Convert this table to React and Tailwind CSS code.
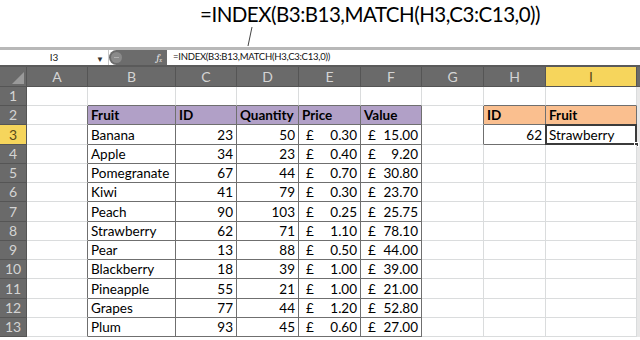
import React from "react";

const rows = [
    ["Banana", 23, 50, "0.30", "15.00"],
    ["Apple", 34, 23, "0.40", "9.20"],
    ["Pomegranate", 67, 44, "0.70", "30.80"],
    ["Kiwi", 41, 79, "0.30", "23.70"],
    ["Peach", 90, 103, "0.25", "25.75"],
    ["Strawberry", 62, 71, "1.10", "78.10"],
    ["Pear", 13, 88, "0.50", "44.00"],
    ["Blackberry", 18, 39, "1.00", "39.00"],
    ["Pineapple", 55, 21, "1.00", "21.00"],
    ["Grapes", 77, 44, "1.20", "52.80"],
    ["Plum", 93, 45, "0.60", "27.00"],
];

const cols = ["A", "B", "C", "D", "E", "F", "G", "H", "I"];
// row heights in px, 13 rows
const heights = ["h-[19px]", "h-[19px]", "h-[20px]", "h-[19px]", "h-[19px]", "h-[19px]", "h-[20px]", "h-[19px]", "h-[19px]", "h-[19px]", "h-[20px]", "h-[19px]", "h-[19px]"];

function inMain(r, c) {
    return r >= 2 && r <= 13 && c >= 1 && c <= 5;
}
function inLookup(r, c) {
    return r >= 2 && r <= 3 && c >= 7 && c <= 8;
}

function Cell({ r, c }) {
    const rightDark = inMain(r, c) || inMain(r, c + 1) || inLookup(r, c) || inLookup(r, c + 1);
    const bottomDark = inMain(r, c) || inMain(r + 1, c) || inLookup(r, c) || inLookup(r + 1, c);

    let bg = "bg-white";
    if (r === 2 && c >= 1 && c <= 5) bg = "bg-[#b1a0c7]";
    if (r === 2 && (c === 7 || c === 8)) bg = "bg-[#fabf8f]";

    const cls = [
        "relative flex min-h-0 items-center whitespace-nowrap border-r border-b px-[3px]",
        bg,
        rightDark ? "border-r-[#6f6f6f]" : "border-r-[#dadcdd]",
        bottomDark ? "border-b-[#6f6f6f]" : "border-b-[#dadcdd]",
    ].join(" ");

    let content = null;
    if (r === 2 && c >= 1 && c <= 5) {
        content = <span className="font-bold">{["Fruit", "ID", "Quantity", "Price", "Value"][c - 1]}</span>;
    } else if (r >= 3 && r <= 13 && c >= 1 && c <= 5) {
        const d = rows[r - 3];
        if (c === 1) content = <span>{d[0]}</span>;
        if (c === 2 || c === 3) content = <span className="ml-auto">{d[c - 1]}</span>;
        if (c === 4 || c === 5)
            content = (
                <div className="flex w-full pl-[4px]">
                    <span>£</span>
                    <span className="ml-auto">{d[c - 1]}</span>
                </div>
            );
    } else if (r === 2 && c === 7) {
        content = <span className="font-bold">ID</span>;
    } else if (r === 2 && c === 8) {
        content = <span className="font-bold">Fruit</span>;
    } else if (r === 3 && c === 7) {
        content = <span className="ml-auto">62</span>;
    } else if (r === 3 && c === 8) {
        content = (
            <>
                <span>Strawberry</span>
                <div className="absolute -left-[1px] -top-[1px] right-[-1px] bottom-[-1px] border-2 border-[#3b3b3b]" />
                <div className="absolute -bottom-[3px] -right-[3px] h-[5px] w-[5px] border border-white bg-[#3b3b3b]" />
            </>
        );
    }

    return <div className={cls}>{content}</div>;
}

export default function App() {
    return (
        <div className="h-[340px] w-[640px] overflow-hidden bg-white" style={{ fontFamily: "Lato, 'Liberation Sans', sans-serif" }}>
            {/* callout with the formula */}
            <div className="relative h-[47px]">
                <div className="pl-[200px] pt-[2px] text-[20.5px] leading-[24px] tracking-[-0.5px] text-black">=INDEX(B3:B13,MATCH(H3,C3:C13,0))</div>
                <svg className="absolute left-[246px] top-[26px]" width="8" height="21" viewBox="0 0 8 21">
                    <line x1="6" y1="1" x2="2" y2="20" stroke="#444" strokeWidth="1" />
                </svg>
            </div>

            {/* formula bar */}
            <div className="flex h-[20px] items-stretch border-t-[3px] border-t-[#b8b8b8] border-b-[2px] border-b-[#5a5a5a] bg-white">
                <div className="relative flex w-[109px] items-center justify-center border-r border-r-[#c8c8c8]">
                    <span className="text-[10px] text-[#222]">I3</span>
                    <span className="absolute right-[4px] top-[3px] text-[8px] text-[#333]">▼</span>
                </div>
                <div className="flex w-[58px] items-center rounded-l-full bg-[#6c6c6c]">
                    <div className="ml-[2px] flex h-[11px] w-[11px] items-center justify-center rounded-full bg-[#8a8a8a]">
                        <div className="h-[1px] w-[5px] bg-[#b0b0b0]" />
                    </div>
                    <span className="ml-auto mr-[5px] font-serif text-[10px] italic leading-none text-[#e8e8e8]">
                        f<sub className="text-[6px]">x</sub>
                    </span>
                </div>
                <div className="flex items-center pl-[6px] text-[9.5px] tracking-[-0.25px] text-[#111]">=INDEX(B3:B13,MATCH(H3,C3:C13,0))</div>
            </div>

            {/* sheet */}
            <div className="grid grid-cols-[27px_61px_88px_61px_62px_62px_61px_62px_62px_91px_3px] text-[13.5px] leading-[16px] text-black">
                {/* header row */}
                <div className="relative h-[20px] border-r border-b border-[#555] bg-[#6a6a6a]">
                    <svg className="absolute bottom-[2px] right-[2px]" width="12" height="12" viewBox="0 0 12 12">
                        <polygon points="12,0 12,12 0,12" fill="#9a9a9a" />
                    </svg>
                </div>
                {cols.map((c) => (
                    <div
                        key={c}
                        className={
                            c === "I"
                                ? "flex h-[20px] items-center justify-center border-r border-b border-[#555] bg-[#f6d55c] text-[14px] text-[#5a4a1a]"
                                : "flex h-[20px] items-center justify-center border-r border-b border-[#555] bg-[#6a6a6a] text-[14px] text-[#d4d4d4]"
                        }
                    >
                        {c}
                    </div>
                ))}
                <div className="h-[20px] border-b border-[#555] bg-[#6a6a6a]" />

                {heights.map((h, i) => {
                    const r = i + 1;
                    return (
                        <React.Fragment key={r}>
                            <div
                                className={
                                    r === 3
                                        ? `${h} flex items-center justify-center border-r border-b border-[#555] bg-[#f6d55c] text-[14px] text-[#5a4a1a]`
                                        : `${h} flex items-center justify-center border-r border-b border-[#555] bg-[#6a6a6a] text-[14px] text-[#d4d4d4]`
                                }
                            >
                                {r}
                            </div>
                            {cols.map((c, ci) => (
                                <Cell key={c} r={r} c={ci} />
                            ))}
                            <div className="bg-[#e8e8e8]" />
                        </React.Fragment>
                    );
                })}
            </div>
        </div>
    );
}
